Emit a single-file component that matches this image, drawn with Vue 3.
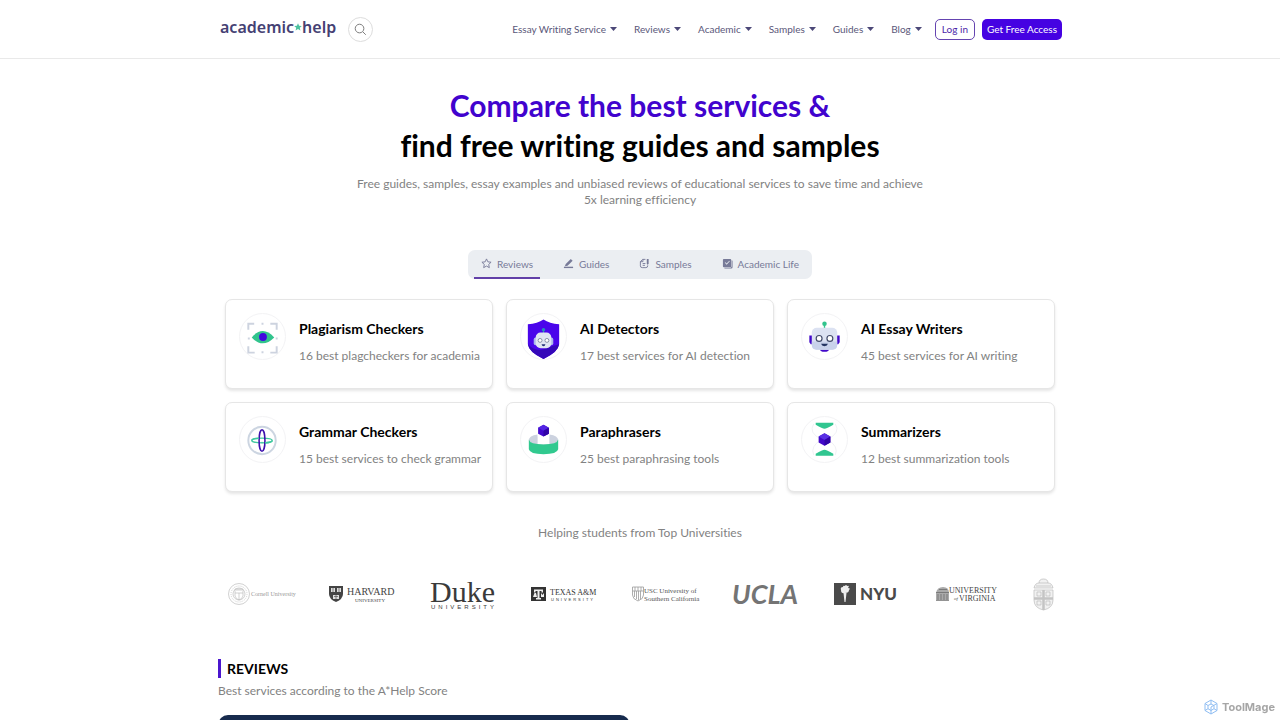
<script setup>
import { ref } from "vue";

const menu = ["Essay Writing Service", "Reviews", "Academic", "Samples", "Guides", "Blog"];
const tabs = ["Reviews", "Guides", "Samples", "Academic Life"];
const activeTab = ref("Reviews");

const services = [
  { icon: "eye", title: "Plagiarism Checkers", intro: "16 best plagcheckers for academia" },
  { icon: "shield", title: "AI Detectors", intro: "17 best services for AI detection" },
  { icon: "robot", title: "AI Essay Writers", intro: "45 best services for AI writing" },
  { icon: "globe", title: "Grammar Checkers", intro: "15 best services to check grammar" },
  { icon: "ring", title: "Paraphrasers", intro: "25 best paraphrasing tools" },
  { icon: "glass", title: "Summarizers", intro: "12 best summarization tools" },
];
</script>

<template>
  <header class="header">
    <div class="container header-row">
      <a href="#" class="logo">
        academic<svg viewBox="0 0 8 8" class="logo-star"><path d="M4 .3 5.1 2.7 7.8 3 5.8 4.8 6.4 7.5 4 6.1 1.6 7.5 2.2 4.8 .2 3 2.9 2.7Z" /></svg>help
      </a>
      <button type="button" class="search" aria-label="Search">
        <svg viewBox="0 0 24 24"><circle cx="11" cy="11" r="4.5" /><path d="m14.5 14.5 3 3" /></svg>
      </button>
      <nav class="nav">
        <a v-for="item in menu" :key="item" href="#" class="nav-link">
          {{ item }}
          <svg viewBox="0 0 7 4" class="caret"><path d="M0 0h7L3.5 4Z" /></svg>
        </a>
      </nav>
      <div class="actions">
        <button type="button" class="btn outline">Log in</button>
        <button type="button" class="btn filled">Get Free Access</button>
      </div>
    </div>
  </header>

  <main class="container">
    <section class="hero">
      <h1><span>Compare the best services &amp;</span><br />find free writing guides and samples</h1>
      <p>
        Free guides, samples, essay examples and unbiased reviews of educational services to save time and achieve
        5x learning efficiency
      </p>
    </section>

    <div class="tabs">
      <button
        v-for="tab in tabs"
        :key="tab"
        type="button"
        class="tab"
        :class="{ active: tab === activeTab }"
        @click="activeTab = tab"
      >
        <svg viewBox="0 0 12 12" class="tab-icon">
          <path v-if="tab === 'Reviews'" class="line" d="m6 1 1.5 3.2 3.5.4-2.6 2.4.7 3.5L6 8.8l-3.1 1.7.7-3.5L1 4.6l3.5-.4Z" />
          <template v-else-if="tab === 'Guides'">
            <path d="M3 6.5 8.5 1l2 2L5 8.5l-3 .6Z" />
            <path d="M1 9.5h10V11H1Z" />
          </template>
          <template v-else-if="tab === 'Samples'">
            <path class="line" d="M7 1.5H4L1.500 4v4.500q0 2 2 2h4q2 0 2-2V8M4.300 1.500V4H1.500M4 6h3M4 8h2.500" />
            <path d="M8.5 1h2v5l-1 1.500-1-1.500Z" />
          </template>
          <template v-else>
            <path fill-rule="evenodd" d="M2 1h7q1 0 1 1v7q0 1-1 1H2q-1 0-1-1V2q0-1 1-1Zm1 4 2 2.300L8.500 3.500 8 3 5 6 3.600 4.500Z" />
            <path d="M10.500 2.500q1 0 1 1V10q0 1.500-1.500 1.500H3.500q-1 0-1-1H9q1.500 0 1.500-1.500Z" />
          </template>
        </svg>
        {{ tab }}
      </button>
    </div>

    <section class="cards">
      <a v-for="item in services" :key="item.title" href="#" class="card">
        <span class="badge">
          <svg viewBox="0 0 46 46">
            <template v-if="item.icon === 'eye'">
              <path d="M8.500 16V10h6M31 10h6.500v6M37.500 33v6.500H31M15 39.500H8.500V33" fill="none" stroke="#cdd3df" stroke-width="2" />
              <path d="M22 9h2v2h-2ZM22 38h2v2h-2ZM8 24h2v2H8ZM36.500 24h2v2h-2Z" fill="#cdd3df" />
              <path d="M12 24q11-13 23 0-12 12-23 0Z" fill="#31c48d" />
              <circle cx="23.500" cy="23.500" r="4" fill="#4208df" />
            </template>
            <template v-else-if="item.icon === 'shield'">
              <path d="M23 5.500q6 4 16 5V31q-1 8-16 15Q8 39 7 31V10.500q10-1 16-5Z" fill="#4a05eb" />
              <path d="M7 31q8 8 16 5t16-5q-1 8-16 15Q8 39 7 31Z" fill="#3407b8" />
              <path d="M22.500 16h1v5h-1Z" fill="#31a5a5" />
              <circle cx="23" cy="16" r="1.800" fill="#278bbc" />
              <rect x="13" y="24" width="20" height="8" rx="2" fill="#aab6ea" />
              <rect x="15" y="19" width="16" height="16" rx="5" fill="#e0e4f2" />
              <g fill="#fff" stroke="#858ca5"><circle cx="19.500" cy="27" r="2" /><circle cx="26.500" cy="27" r="2" /></g>
              <path d="M21 31h4q-.5 2-2 2t-2-2Z" fill="#27337a" />
            </template>
            <template v-else-if="item.icon === 'robot'">
              <path d="M22.300 10h1.400v6h-1.400Z" fill="#31c48d" />
              <circle cx="23" cy="10" r="2.300" fill="#31c48d" />
              <path d="M7.500 22H11v9H9l-1.500-2ZM35 22h3.500v7L37 31h-2ZM18 36h10q-1 2.500-3 2.500h-4q-2 0-3-2.500Z" fill="#4208c9" />
              <rect x="10" y="14" width="26" height="22.500" rx="5" fill="#dce2f2" />
              <path d="M10 28h26v3.500q0 5-5 5H15q-5 0-5-5Z" fill="#c9d2eb" />
              <g fill="#fff" stroke="#414a69" stroke-width="1.200"><circle cx="17.500" cy="25" r="3" /><circle cx="28.500" cy="25" r="3" /></g>
              <path d="M19.500 30.500h7Q26 33 23 33t-3.500-2.500Z" fill="#233361" />
            </template>
            <g v-else-if="item.icon === 'globe'" fill="none">
              <circle cx="22.500" cy="24" r="14" stroke="#ccd5e1" stroke-width="2" />
              <ellipse cx="22.500" cy="24" rx="10.500" ry="2.500" stroke="#41c8a0" stroke-width="1.300" />
              <ellipse cx="22.500" cy="24" rx="3" ry="11" stroke="#3e12ae" stroke-width="1.600" />
              <path d="M19.500 21.800q-7 0-7.500 2.200M25.500 26.300q7 0 7.500-2.300" stroke="#41c8a0" stroke-width="1.500" />
              <circle cx="22.500" cy="26" r=".8" fill="#41c8a0" />
            </g>
            <template v-else-if="item.icon === 'ring'">
              <path d="M8 24q0-5 9-6l1 8h10l1-8q9 1 9 6-3 5-15 5T8 24Z" fill="#ccd2df" />
              <path d="M17 15h12v13H17Z" fill="#fff" />
              <path d="M8 23q1 5 15 5t15-5v10q-1 5-15 5T8 33Z" fill="#31c98f" />
              <path d="M17.500 11 23 8l5.500 3v6L23 20l-5.500-3Z" fill="#4209cc" />
              <path d="M17.500 11 23 8l5.500 3-5.500 3Z" fill="#5325e4" />
              <path d="m23 14 5.500-3v6L23 20Z" fill="#3004a7" />
            </template>
            <template v-else>
              <path d="M12 7q-6 9 8 16Q8 30 12 39M34 7q6 9-8 16 12 7 8 16" fill="none" stroke="#f0f1f4" />
              <path d="M14 6h18v2q-7 4-9 4t-9-4ZM14 39.500h18v-2q-7-4-9-4t-9 4Z" fill="#31c690" />
              <path d="m17 20 6-3.500 6 3.500v6l-6 3.500-6-3.500Z" fill="#4208c8" />
              <path d="m17 20 6-3.500 6 3.500-6 3.500Z" fill="#5930e3" />
              <path d="m23 23.500 6-3.500v6l-6 3.500Z" fill="#3004a7" />
            </template>
          </svg>
        </span>
        <span class="card-text">
          <strong>{{ item.title }}</strong>
          <span>{{ item.intro }}</span>
        </span>
      </a>
    </section>

    <section class="universities">
      <p>Helping students from Top Universities</p>
      <div class="schools">
        <svg viewBox="0 0 68 36" role="img" aria-label="Cornell University" class="serif" fill="#999">
          <g fill="none" stroke="#bdbdbd" stroke-width=".7">
            <circle cx="11" cy="18" r="10.500" /><circle cx="11" cy="18" r="8" stroke-dasharray="1 1" /><circle cx="11" cy="18" r="6" />
            <path d="M7 13h8v7q-1 3-4 4-3-1-4-4ZM7 17h8M11 17v7M8 14h6" />
          </g>
          <text x="23" y="20" font-size="6">Cornell University</text>
        </svg>
        <svg viewBox="0 0 68 36" role="img" aria-label="Harvard University" class="serif" fill="#444">
          <path d="M0 10h14v8q0 5-7 8-7-3-7-8Z" />
          <path d="M2 12h4v4H2ZM8 12h4v4H8ZM4 19h6v4H4Z" fill="#ddd" />
          <path d="M4 12v4M10 12v4M7 19v4M5 20.500h4" stroke="#555" stroke-width=".7" />
          <text x="18" y="19" font-size="10">HARVARD</text>
          <text x="26" y="26" font-size="5">UNIVERSITY</text>
        </svg>
        <svg viewBox="0 0 68 36" role="img" aria-label="Duke University" fill="#3a3a3a">
          <text x="0" y="26" font-size="30" class="serif">Duke</text>
          <text x="1" y="33" font-size="6" class="spaced wide">UNIVERSITY</text>
        </svg>
        <svg viewBox="0 0 68 36" role="img" aria-label="Texas A&M University" class="serif" fill="#333">
          <path d="M0 11h15v14H0Z" />
          <path d="M3 13.500h9v3h-1.500V15H8.500v7H10v1.500H5V22h1.500v-7h-2v1.500H3ZM2 21l1.500-4H5l1 4M10 21v-4l1.500 2 1.500-2v4" fill="#eee" />
          <text x="19" y="19" font-size="8">TEXAS A&amp;M</text>
          <text x="20" y="25" font-size="4" class="spaced">UNIVERSITY</text>
        </svg>
        <svg viewBox="0 0 68 36" role="img" aria-label="USC University of Southern California" class="serif" fill="#555">
          <path d="M.5 11h11v8q0 4-5.500 6-5.500-2-5.500-6ZM.5 15h11M3 11v4M6 11v4M9 11v4M2.500 15v6M4.500 15v8M6.500 15v9M8.500 15v8" fill="none" stroke="#999" stroke-width=".8" />
          <text x="12" y="17" font-size="7">USC University of</text>
          <text x="12" y="25" font-size="7">Southern California</text>
        </svg>
        <svg viewBox="0 0 68 36" role="img" aria-label="UCLA" class="ucla" fill="#747474">
          <text x="-1" y="28" font-size="27">UCLA</text>
        </svg>
        <svg viewBox="0 0 68 36" role="img" aria-label="NYU" class="nyu" fill="#4a4a4a">
          <path d="M0 7h22v22H0Z" />
          <path d="M9.500 17h3L11.500 26h-1ZM7 14q-1-3 2-3 0-2 2-1 1-2 2 0 3-1 1 2 3 0 1 2 0 3-4 3-4 1-4-3Z" fill="#eee" />
          <text x="26" y="24" font-size="17">NYU</text>
        </svg>
        <svg viewBox="0 0 68 36" role="img" aria-label="University of Virginia" class="serif" fill="#444">
          <path d="M1 17q1-6 7-6t6 6v7H1Z" fill="#aaa" />
          <path d="M1 16.500h13M3 18v6M6 18v6M9 18v6M12 18v6M1 24.500h13M4 13.500h8" stroke="#666" stroke-width=".7" />
          <text x="14" y="17" font-size="8">UNIVERSITY</text>
          <text x="19" y="24" font-size="5" class="italic">of</text>
          <text x="24" y="25" font-size="8">VIRGINIA</text>
        </svg>
        <svg viewBox="3 0 68 36" role="img" aria-label="Brown University" fill="#f1f1f1" stroke="#bbb" stroke-width=".7">
          <path d="M1 14h19v10q0 8-9.500 10Q1 32 1 24Z" />
          <path d="M1 12q1-5 5-5 0-4 4.500-4T15 7q4 0 5 5Z" />
          <path d="M3 10h15M6 7h9M4 16h4v4H4ZM13 16h4v4h-4ZM4 25h4v4H4ZM13 25h4v4h-4Z" />
          <path d="M10.500 14v20M1 22.500h19" stroke="#c4c4c4" stroke-width="2.500" />
        </svg>
      </div>
    </section>

    <section class="reviews">
      <h2>REVIEWS</h2>
      <p>Best services according to the A*Help Score</p>
      <div class="review-grid"><article class="review-card"></article></div>
    </section>
  </main>

  <a href="#" class="watermark">
    <svg viewBox="0 0 16 16"><path d="m8 1 6 3.500v7L8 15l-6-3.500v-7ZM8 5l3 1.500v3.200L8 11.500 5 9.700V6.500ZM2 4.500l3 2M14 4.500l-6 3.500M8 8v7M8 1v4M2 11.500l3-1.800M14 11.500l-3-1.800" /></svg>
    ToolMage
  </a>
</template>

<style>
html {
  scrollbar-width: none;
}
body {
  margin: 0;
  background: #fff;
  font-family: Lato, "Noto Sans", sans-serif;
  font-variant-ligatures: none;
}
</style>

<style scoped>
a {
  color: inherit;
  text-decoration: none;
}
button {
  border: 0;
  font: inherit;
  font-variant-ligatures: none;
  cursor: pointer;
}
h1,
h2,
p {
  margin: 0;
}
.container {
  max-width: 844px;
  margin: 0 auto;
}
.header {
  border-bottom: 1px solid #e9e9e9;
}
.header-row {
  display: flex;
  align-items: center;
  height: 58px;
}
.logo {
  display: flex;
  align-items: center;
  color: #454173;
  font: 600 16px/24px "Noto Sans", sans-serif;
  padding: 0 12px 4px 2px;
}
.logo-star {
  width: 8px;
  height: 8px;
  fill: #4dc3a0;
}
.search {
  flex: none;
  width: 25px;
  height: 25px;
  padding: 0;
  border: 1px solid #ddd;
  border-radius: 50%;
  background: #fff;
}
.search svg {
  display: block;
  fill: none;
  stroke: #777;
}
.nav {
  display: flex;
  gap: 17px;
  margin-left: auto;
}
.nav-link {
  display: flex;
  align-items: center;
  gap: 4px;
  color: #5a5779;
  font-size: 10px;
  line-height: 16px;
  white-space: nowrap;
}
.caret {
  width: 7px;
  height: 4px;
  fill: #4c4878;
}
.actions {
  display: flex;
  gap: 7px;
  margin-left: 13px;
}
.btn {
  height: 21px;
  padding: 0 5px;
  border-radius: 5px;
  font-size: 10px;
  white-space: nowrap;
}
.outline {
  padding: 0 6px;
  border: 1px solid #6544b0;
  background: #fff;
  color: #4c1fa8;
}
.filled {
  background: #4502e2;
  color: #fff;
}
.hero {
  padding-top: 26px;
  text-align: center;
}
.hero h1 {
  font-size: 30px;
  line-height: 40px;
}
.hero h1 span {
  color: #4103ce;
}
.hero p {
  max-width: 576px;
  margin: 11px auto 0;
  color: #828282;
  font-size: 12px;
  line-height: 16px;
}
.tabs {
  display: flex;
  gap: 16px;
  width: fit-content;
  margin: 42px auto 20px;
  padding: 0 6px;
  border-radius: 7px;
  background: #ebeef2;
}
.tab {
  display: flex;
  align-items: center;
  gap: 5px;
  height: 29px;
  padding: 0 7px;
  border-bottom: 2px solid transparent;
  background: none;
  color: #777a98;
  font-size: 10px;
}
.tab.active {
  border-color: #6240a8;
}
.tab-icon {
  width: 11px;
  height: 11px;
  fill: #777a98;
}
.tab-icon .line {
  fill: none;
  stroke: #777a98;
}
.cards {
  display: grid;
  grid-template-columns: repeat(3, minmax(0, 1fr));
  gap: 13px;
  padding: 0 7px;
}
.card {
  display: flex;
  gap: 13px;
  box-sizing: border-box;
  min-height: 90px;
  padding: 13px;
  border: 1px solid #e6e6e6;
  border-radius: 7px;
  background: #fff;
  box-shadow: 0 2px 3px rgba(0, 0, 0, 0.1);
}
.badge {
  flex: none;
  box-sizing: border-box;
  width: 47px;
  height: 47px;
  border: 1px solid #f3f3f5;
  border-radius: 50%;
}
.badge svg {
  display: block;
  overflow: visible;
}
.card-text {
  display: flex;
  flex-direction: column;
  gap: 7px;
  padding-top: 6px;
  color: #828282;
  font-size: 12px;
  line-height: 20px;
  white-space: nowrap;
}
.card-text strong {
  color: #000;
  font-size: 14px;
}
.universities {
  margin-top: 31px;
  padding: 0 7px;
  text-align: center;
}
.universities p {
  color: #828282;
  font-size: 12px;
  line-height: 20px;
}
.schools {
  display: flex;
  gap: 33px;
  margin-top: 29px;
  padding: 4px 0 4px 3px;
  overflow: hidden;
}
.schools svg {
  flex: none;
  width: 68px;
  height: 36px;
  overflow: visible;
}
.serif {
  font-family: "Liberation Serif", serif;
}
.spaced {
  font-family: "Liberation Sans", sans-serif;
  letter-spacing: 2px;
}
.spaced.wide {
  letter-spacing: 3px;
}
.italic {
  font-style: italic;
}
.ucla {
  font-family: Lato, sans-serif;
  font-style: italic;
  font-weight: 700;
}
.nyu {
  font-family: Lato, sans-serif;
  font-weight: 900;
}
.reviews {
  margin-top: 43px;
}
.reviews h2 {
  padding-left: 6px;
  border-left: 3px solid #4b16ce;
  font-size: 14px;
  line-height: 19px;
}
.reviews p {
  margin-top: 3px;
  color: #828282;
  font-size: 12px;
  line-height: 20px;
}
.review-grid {
  display: grid;
  grid-template-columns: repeat(2, minmax(0, 1fr));
  gap: 20px;
  margin-top: 14px;
}
.review-card {
  min-height: 200px;
  border-radius: 10px;
  background: #172b4d;
}
.watermark {
  position: fixed;
  right: 5px;
  bottom: 5px;
  display: flex;
  align-items: center;
  gap: 3px;
  color: #a6a6a6;
  font: bold 11px/16px Inter, sans-serif;
}
.watermark svg {
  width: 16px;
  height: 16px;
  fill: none;
  stroke: #8fbdf2;
}
</style>
